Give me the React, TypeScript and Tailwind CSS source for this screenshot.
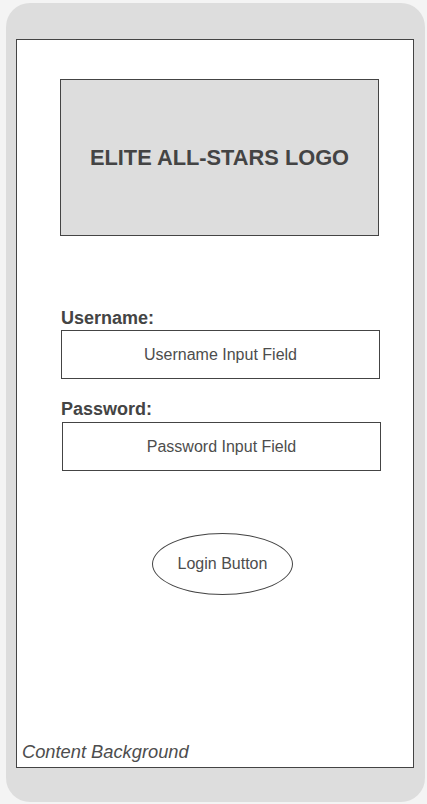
export default function App() {
  return (
    <div
      className="w-[427px] h-[804px] bg-[#f4f4f4] pt-[3px] pl-[6px]"
      style={{ fontFamily: '"Liberation Sans", Arial, sans-serif' }}
    >
      <div className="w-[419px] h-[799px] rounded-[24px] bg-[#dddddd] pt-[36px] pl-[10px]">
        <div className="w-[398px] h-[729px] border border-[#444444] bg-white flex flex-col text-[#444444]">
          <div className="ml-[43px] mt-[39px] w-[319px] h-[157px] border border-[#444444] bg-[#dddddd] flex items-center justify-center">
            <span className="text-[21.8px] font-bold leading-[24px] text-[#444444]">ELITE ALL-STARS LOGO</span>
          </div>

          <div className="ml-[44px] mt-[72px] text-[18px] font-bold leading-[20px]">Username:</div>
          <div className="ml-[44px] mt-[2px] w-[319px] h-[49px] border border-[#444444] flex items-center justify-center text-[16px] leading-[20px] text-[#4d4d4d]">
            Username Input Field
          </div>

          <div className="ml-[44px] mt-[20px] text-[18px] font-bold leading-[20px]">Password:</div>
          <div className="ml-[45px] mt-[3px] w-[319px] h-[49px] border border-[#444444] flex items-center justify-center text-[16px] leading-[20px] text-[#4d4d4d]">
            Password Input Field
          </div>

          <div className="ml-[135px] mt-[62px] w-[141px] h-[62px] border border-[#444444] rounded-[50%] flex items-center justify-center text-[16px] leading-[20px] text-[#4d4d4d]">
            Login Button
          </div>

          <div className="mt-auto ml-[5px] pb-[5px] text-[18.3px] italic leading-[20px] text-[#4d4d4d]">
            Content Background
          </div>
        </div>
      </div>
    </div>
  );
}
